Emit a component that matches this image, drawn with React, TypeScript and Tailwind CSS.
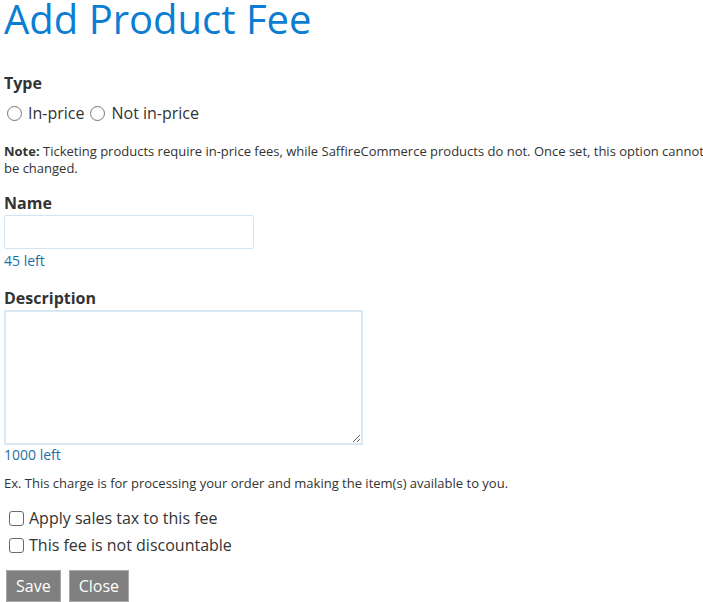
import React from "react";

export default function App() {
  return (
    <div className="bg-white min-h-[602px] px-1 font-['Open_Sans',sans-serif] text-[#333]">
      <h1 className="text-[40px] leading-[38px] text-[#0b7dd3] font-normal">Add Product Fee</h1>

      <div className="mt-[33px] text-[16px] leading-[24px] font-bold">Type</div>
      <div className="mt-[6px] flex items-center text-[16px] leading-[24px] text-[#333]">
        <label className="flex items-center">
          <input type="radio" name="type" className="appearance-none ml-[3px] mr-[6px] w-[15px] h-[15px] rounded-full border border-[#767676] bg-white" />
          <span>In-price</span>
        </label>
        <label className="flex items-center ml-[6px]">
          <input type="radio" name="type" className="appearance-none mr-[6px] w-[15px] h-[15px] rounded-full border border-[#767676] bg-white" />
          <span>Not in-price</span>
        </label>
      </div>

      <p className="mt-[18px] mr-[-8px] text-[13px] leading-[17px]">
        <b>Note:</b> Ticketing products require in-price fees, while SaffireCommerce products do not. Once set, this option cannot be changed.
      </p>

      <div className="mt-[14px] text-[16px] leading-[24px] font-bold">Name</div>
      <input type="text" className="block w-[250px] h-[34px] border border-[#d2e5f4] rounded-[2px] outline-none px-2" />
      <div className="mt-[2px] text-[14px] leading-[20px] text-[#1d6fa5]">45 left</div>

      <div className="mt-[15px] text-[16px] leading-[24px] font-bold">Description</div>
      <textarea className="block w-[359px] h-[135px] border-2 border-[#d8e8f5] outline-none p-1" />
      <div className="text-[14px] leading-[20px] text-[#1d6fa5]">1000 left</div>

      <p className="mt-[9px] text-[13px] leading-[18px]">Ex. This charge is for processing your order and making the item(s) available to you.</p>

      <label className="mt-[14px] flex items-center text-[16px] leading-[24px]">
        <input type="checkbox" className="appearance-none ml-[5px] mr-[5px] w-[15px] h-[15px] rounded-[3px] border border-[#6b6b6b] bg-white" />
        <span>Apply sales tax to this fee</span>
      </label>
      <label className="mt-[3px] flex items-center text-[16px] leading-[24px]">
        <input type="checkbox" className="appearance-none ml-[5px] mr-[5px] w-[15px] h-[15px] rounded-[3px] border border-[#6b6b6b] bg-white" />
        <span>This fee is not discountable</span>
      </label>

      <div className="mt-[13px] flex gap-[8px] pl-[2px]">
        <button className="h-[32px] px-[9px] bg-[#808080] border border-[#a9a9a9] text-white text-[16px] leading-[24px]">Save</button>
        <button className="h-[32px] px-[9px] bg-[#808080] border border-[#a9a9a9] text-white text-[16px] leading-[24px]">Close</button>
      </div>
    </div>
  );
}
